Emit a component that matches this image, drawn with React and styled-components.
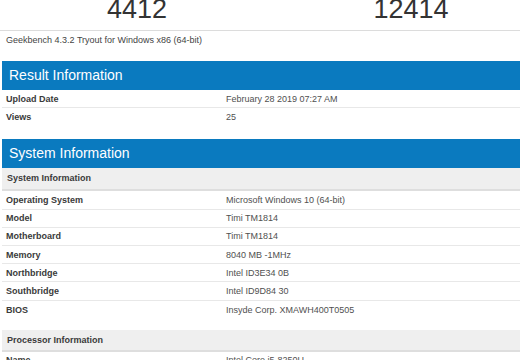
import React from 'react'
import styled, { createGlobalStyle } from 'styled-components'

const Global = createGlobalStyle`
    html, body {
        margin: 0;
        padding: 0;
        background: #fff;
        overflow: hidden;
    }
    body {
        font-family: "Liberation Sans", Arial, sans-serif;
        color: #333;
    }
`

const Page = styled.div`
    width: 560px;
    padding: 0 2px;
`

// score boxes, the top half is scrolled off
const Scores = styled.div`
    display: grid;
    grid-template-columns: 274px 274px;
    height: 30px;
    border-bottom: 1px solid #dcdcdc;
    margin: 0 -2px;
`

const Score = styled.div`
    margin-top: -4px;
    font-size: 27px;
    line-height: 27px;
    text-align: center;
    color: #333;
`

const Version = styled.div`
    padding: 4px 4px 15px;
    font-size: 9px;
    line-height: 11px;
    color: #444;
`

const Section = styled.section`
    margin-bottom: 13px;
`

const Header = styled.h2`
    margin: 0;
    height: 29px;
    padding-left: 7px;
    background: #0a7abf;
    color: #fff;
    font-size: 14px;
    font-weight: normal;
    line-height: 29px;
`

const Group = styled.div`
    & + & {
        margin-top: 11px;
    }
`

const SubHeader = styled.div`
    height: ${p => p.$h || 21}px;
    padding-left: 5px;
    background: #efefef;
    border-bottom: 2px solid #dedede;
    font-size: 9px;
    font-weight: bold;
    line-height: ${p => p.$h || 21}px;
    color: #3a3a3a;
`

const Row = styled.div`
    display: grid;
    grid-template-columns: 220px 1fr;
    box-sizing: border-box;
    height: 18.2px;
    align-items: center;
    border-bottom: 1px solid #e8e8e8;
    font-size: 9px;

    &:last-child {
        border-bottom: none;
    }
`

const Name = styled.div`
    padding-left: 4px;
    font-weight: bold;
    color: #3a3a3a;
`

const Value = styled.div`
    padding-left: 4px;
    color: #505050;
`

const result = [
    ['Upload Date', 'February 28 2019 07:27 AM'],
    ['Views', '25'],
]

const system = [
    ['Operating System', 'Microsoft Windows 10 (64-bit)'],
    ['Model', 'Timi TM1814'],
    ['Motherboard', 'Timi TM1814'],
    ['Memory', '8040 MB -1MHz'],
    ['Northbridge', 'Intel ID3E34 0B'],
    ['Southbridge', 'Intel ID9D84 30'],
    ['BIOS', 'Insyde Corp. XMAWH400T0505'],
]

const processor = [
    ['Name', 'Intel Core i5-8250U'],
    ['Topology', '1 Processor, 4 Cores, 8 Threads'],
]

const Rows = ({ data }) =>
    data.map(([k, v]) => (
        <Row key={k}>
            <Name>{k}</Name>
            <Value>{v}</Value>
        </Row>
    ))

export default function App() {
    return (
        <>
            <Global />
            <Page>
                <Scores>
                    <Score>4412</Score>
                    <Score>12414</Score>
                </Scores>
                <Version>Geekbench 4.3.2 Tryout for Windows x86 (64-bit)</Version>

                <Section>
                    <Header>Result Information</Header>
                    <Rows data={result} />
                </Section>

                <Section>
                    <Header>System Information</Header>
                    <Group>
                        <SubHeader>System Information</SubHeader>
                        <Rows data={system} />
                    </Group>
                    <Group>
                        <SubHeader $h={20}>Processor Information</SubHeader>
                        <Rows data={processor} />
                    </Group>
                </Section>
            </Page>
        </>
    )
}
